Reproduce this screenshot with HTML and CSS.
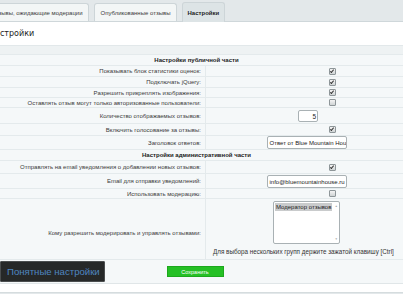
FILE: index.html
```html
<!DOCTYPE html>
<html>
<head>
<meta charset="utf-8">
<link rel="stylesheet" href="styles.css">
</head>
<body>
<div class="page">
  <div class="tabs">
    <div class="tab">Отзывы, ожидающие модерации</div>
    <div class="tab">Опубликованные отзывы</div>
    <div class="tab active">Настройки</div>
  </div>
  <div class="title">Настройки</div>
  <div class="panel">
    <table class="form">
      <tr class="top"><td colspan="2"></td></tr>
      <tr class="head h1"><td colspan="2">Настройки публичной части</td></tr>
      <tr class="r h11"><td class="l">Показывать блок статистики оценок:</td><td class="v"><span class="cb on"></span></td></tr>
      <tr class="r h11"><td class="l">Подключать jQuery:</td><td class="v"><span class="cb on"></span></td></tr>
      <tr class="r h10"><td class="l">Разрешить прикреплять изображения:</td><td class="v"><span class="cb on"></span></td></tr>
      <tr class="r h10"><td class="l">Оставлять отзыв могут только авторизованные пользователи:</td><td class="v"><span class="cb"></span></td></tr>
      <tr class="r h16"><td class="l">Количество отображаемых отзывов:</td><td class="v"><span class="num">5</span></td></tr>
      <tr class="r h12"><td class="l">Включить голосование за отзывы:</td><td class="v"><span class="cb on"></span></td></tr>
      <tr class="r h13"><td class="l">Заголовок ответов:</td><td class="v"><span class="txt">Ответ от Blue Mountain Hou</span></td></tr>
      <tr class="head h11"><td colspan="2">Настройки административной части</td></tr>
      <tr class="r h13"><td class="l">Отправлять на email уведомления о добавлении новых отзывов:</td><td class="v"><span class="cb on"></span></td></tr>
      <tr class="r h15"><td class="l">Email для отправки уведомлений:</td><td class="v"><span class="txt">info@bluemountainhouse.ru</span></td></tr>
      <tr class="r h10"><td class="l">Использовать модерацию:</td><td class="v"><span class="cb"></span></td></tr>
      <tr class="r big"><td class="l lb">Кому разрешить модерировать и управлять отзывами:</td><td class="v">
        <div class="vbox">
          <div class="select"><div class="opts"><span class="opt">Модератор отзывов</span></div><div class="sb"><span>▲</span><span>▼</span></div></div>
          <div class="hint">Для выбора нескольких групп держите зажатой клавишу [Ctrl]</div>
        </div>
      </td></tr>
      <tr class="foot"><td colspan="2"><span class="btn">Сохранить</span></td></tr>
    </table>
  </div>
  <div class="after"></div>
  <div class="bar"></div>
</div>
<div class="badge">Понятные настройки</div>
</body>
</html>
```
FILE: styles.css
```css
html, body { margin: 0; padding: 0; background: #fff; overflow: hidden; }
body { width: 403px; height: 294px; position: relative; font-family: "Liberation Sans", Arial, sans-serif; color: #2b2b2b; }
.page { margin-left: -20px; width: 423px; }
.tabs { display: flex; align-items: flex-end; gap: 5px; height: 22px; background: #e3e8ea; border-bottom: 1px solid #cfd7da; padding-left: 5px; box-sizing: border-box; }
.tab { height: 18px; line-height: 18px; padding: 0 5px; font-size: 6px; background: #f3f6f6; border: 1px solid #cdd5d8; border-bottom: none; border-radius: 3px 3px 0 0; box-sizing: border-box; color: #3b3b3b; white-space: nowrap; }
.tab:nth-child(2) { padding: 0 5px 0 6px; }
.tab.active { height: 20px; line-height: 20px; margin-bottom: -1px; background: #dde4e6; font-weight: bold; color: #222; }
.title { height: 23px; line-height: 24px; padding-left: 9px; font-family: "DejaVu Sans", sans-serif; font-size: 8px; color: #222; }
.panel { background: #f5f8f9; border-top: 1px solid #e2e8ea; }
.form { width: 100%; border-collapse: collapse; font-size: 6px; }
.form td { padding: 0; border-bottom: 1px solid #e4eaec; }
.top td { height: 8px; background: #eef2f3; }
.head td { text-align: center; font-weight: bold; color: #222; padding-left: 10px; }
.h1 td { height: 10px; }
.h10 td { height: 9px; }
.h11 td { height: 10px; }
.h12 td { height: 11px; }
.h13 td { height: 12px; }
.h15 td { height: 14px; }
.h16 td { height: 15px; }
.l { width: 221px; text-align: right; padding-right: 4px !important; border-right: 1px solid #e4eaec; color: #3a3a3a; white-space: nowrap; }
.lb { padding-top: 8px !important; }
.v { text-align: center; vertical-align: middle; }
.cb { display: inline-block; width: 5px; height: 5px; border: 1px solid #8e9699; border-radius: 1px; background: linear-gradient(#f4f4f4, #cfd3d4); margin-left: 56px; vertical-align: middle; position: relative; }
.cb.on::after { content: ""; position: absolute; left: 1.2px; top: 0; width: 1.4px; height: 2.8px; border: solid #333; border-width: 0 1px 1px 0; transform: rotate(40deg); }
.num { display: inline-block; width: 20px; height: 12px; line-height: 12px; border: 1px solid #a9b1b4; border-radius: 2px; background: #fff; text-align: right; padding-right: 1px; box-sizing: border-box; margin-left: 7px; vertical-align: middle; font-size: 6.5px; color: #222; }
.txt { display: inline-block; width: 80px; height: 13px; line-height: 12px; border: 1px solid #a9b1b4; border-radius: 2px; background: #fff; text-align: left; padding-left: 2px; box-sizing: border-box; overflow: hidden; white-space: nowrap; margin-left: 4px; vertical-align: middle; color: #222; }
.big .v { vertical-align: top; padding-top: 2px; }
.vbox { height: 58px; display: flex; flex-direction: column; align-items: flex-start; }
.select { display: flex; flex: none; width: 67px; height: 43px; margin-left: 67px; border: 1px solid #a9b1b4; border-radius: 2px; background: #fff; box-sizing: border-box; }
.opts { flex: 1; padding: 1px; text-align: left; }
.opt { display: block; background: #c9cbcc; color: #222; padding: 0 1px; height: 8px; line-height: 8px; white-space: nowrap; overflow: hidden; }
.sb { width: 7px; display: flex; flex-direction: column; justify-content: space-between; align-items: center; font-size: 3px; color: #aaa; padding: 2px 0; }
.hint { margin-top: 4px; color: #333; font-size: 6.3px; line-height: 8px; white-space: nowrap; padding-left: 7px; }
.foot td { height: 23px; text-align: center; background: #f5f8f9; border-bottom: 1px solid #e0e6e8; }
.btn { display: inline-block; width: 57px; height: 11px; line-height: 11px; background: #25c025; border: 1px solid #1da81d; box-sizing: border-box; color: #fff; font-size: 5.5px; margin-left: 7px; }
.after { height: 8px; background: #fff; }
.bar { height: 6px; background: #e3e8ea; border-top: 1px solid #d5dcde; }
.badge { position: absolute; left: 0; top: 261px; width: 105px; height: 21px; line-height: 20px; box-sizing: border-box; background: #262828; border: 1px solid #4a4d4e; border-radius: 1px; color: #4f86c0; font-family: "Liberation Sans", Arial, sans-serif; font-size: 9.6px; padding-left: 6px; white-space: nowrap; }
```
